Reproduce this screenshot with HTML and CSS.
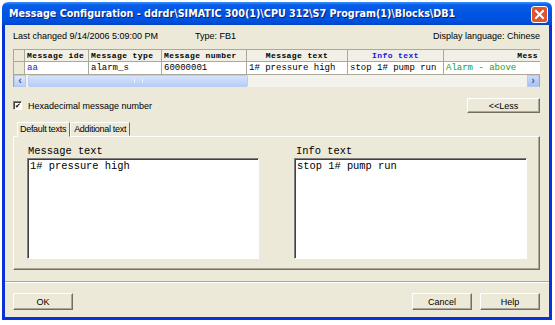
FILE: index.html
```html
<!DOCTYPE html>
<html lang="en">

<head>
    <meta charset="UTF-8">
    <title>Message Configuration</title>
    <link rel="stylesheet" href="styles.css">
</head>

<body>

    <div class="window">
        <div class="titlebar">
            <span class="title">Message Configuration - ddrdr\SIMATIC 300(1)\CPU 312\S7 Program(1)\Blocks\DB1</span>
            <span class="close">
                <svg width="17" height="17" viewBox="0 0 17 17">
                    <rect x="0.5" y="0.5" width="16" height="16" rx="2.5" fill="#E0542F" stroke="#fff"/>
                    <path d="M5 5 L12 12 M12 5 L5 12" stroke="#fff" stroke-width="2" stroke-linecap="square"/>
                </svg>
            </span>
        </div>

        <div class="body">
            <div class="info-row">
                <span class="changed">Last changed 9/14/2006 5:09:00 PM</span>
                <span class="type">Type: FB1</span>
                <span class="lang">Display language: Chinese</span>
            </div>

            <div class="grid">
                <table>
                    <tr class="head">
                        <td class="corner"></td>
                        <td class="c1">Message ide</td>
                        <td class="c2">Message type</td>
                        <td class="c3">Message number</td>
                        <td class="c4 center">Message text</td>
                        <td class="c5 center blue">Info text</td>
                        <td class="c6 right">Mess</td>
                    </tr>
                    <tr class="data">
                        <td class="corner"></td>
                        <td class="blue">aa</td>
                        <td>alarm_s</td>
                        <td>60000001</td>
                        <td>1# pressure high</td>
                        <td>stop 1# pump run</td>
                        <td class="green">Alarm - above</td>
                    </tr>
                </table>
                <div class="hscroll">
                    <span class="arrow">&lsaquo;</span>
                    <span class="track"><span class="thumb"><span class="grip"></span></span></span>
                    <span class="arrow arrow-right">&rsaquo;</span>
                </div>
            </div>

            <div class="options-row">
                <label class="check"><span class="box">&#10004;</span>Hexadecimal message number</label>
                <button class="btn less">&lt;&lt;Less</button>
            </div>

            <div class="tabs">
                <span class="tab active">Default texts</span>
                <span class="tab">Additional text</span>
            </div>
            <div class="tab-panel">
                <div class="field">
                    <div class="field-label">Message text</div>
                    <div class="textbox">1# pressure high</div>
                </div>
                <div class="field">
                    <div class="field-label">Info text</div>
                    <div class="textbox">stop 1# pump run</div>
                </div>
            </div>

            <div class="separator"></div>

            <div class="buttons">
                <button class="btn">OK</button>
                <span class="spacer"></span>
                <button class="btn">Cancel</button>
                <button class="btn">Help</button>
            </div>
        </div>
    </div>

</body>

</html>
```

FILE: styles.css
```css
/* dialog styles */

body {
    margin: 0;
    background: #fff;
    font-family: "Liberation Sans", Arial, sans-serif;
    font-size: 9px;
    color: #000;
}

.window {
    margin: 2px 0 0 2px;
    width: 550px;
    height: 318px;
    display: flex;
    flex-direction: column;
    box-sizing: border-box;
}

.titlebar {
    height: 23px;
    border-radius: 6px 6px 0 0;
    background: linear-gradient(#3D95FF 0%, #0A5FE8 12%, #0054E3 50%, #0050DC 85%, #0046C8 100%);
    display: flex;
    align-items: center;
    padding: 0 4px 0 7px;
}

.title {
    flex: 1;
    color: #fff;
    font-family: "DejaVu Sans", sans-serif;
    font-weight: bold;
    font-size: 9.6px;
    text-shadow: 1px 1px #0A1E6E;
    white-space: nowrap;
    overflow: hidden;
}

.close {
    display: flex;
    margin-top: 1px;
}

.body {
    flex: 1;
    background: #ECE9D8;
    border: 3px solid #0831D9;
    border-top: none;
    padding: 4px 9px 0 8px;
    display: flex;
    flex-direction: column;
}

.info-row {
    display: flex;
    height: 12px;
    align-items: center;
    margin-top: 1px;
}

.changed {
    width: 182px;
}

.type {
    flex: 1;
}

.grid {
    margin-top: 7px;
    border: 1px solid #ACA899;
    border-bottom: none;
    width: 527px;
    box-sizing: border-box;
}

table {
    border-collapse: collapse;
    table-layout: fixed;
    width: 526px;
    font-family: "Liberation Mono", monospace;
    font-size: 9px;
}

td {
    border: 1px solid #ACA899;
    padding: 0 2px;
    white-space: nowrap;
    overflow: hidden;
    height: 11px;
    line-height: 11px;
}

.head td {
    background: #F2F0E6;
    font-weight: bold;
    font-size: 8px;
    letter-spacing: 0.4px;
    border-top: none;
}

.data td {
    background: #fff;
    height: 12px;
}

td:first-child {
    border-left: none;
}

td:last-child {
    border-right: none;
}

.corner {
    width: 6px;
    background: #ECE9D8 !important;
}

.c1 { width: 59px; }
.c2 { width: 68px; }
.c3 { width: 80px; }
.c4 { width: 96px; }
.c5 { width: 91px; }

.center {
    text-align: center;
}

.right {
    text-align: right;
}

.blue {
    color: #1414E6;
}

.green {
    color: #22A022;
}

.hscroll {
    display: flex;
    height: 12px;
    background: #F3F2EC;
}

.arrow {
    width: 12px;
    background: linear-gradient(#DDE9FE, #BBCEF8);
    border: 1px solid #B5C9F1;
    box-sizing: border-box;
    font-size: 11px;
    font-weight: bold;
    line-height: 9px;
    text-align: center;
    color: #4D6185;
}

.arrow-right {
    background: linear-gradient(#CBDCFD, #A6C1F6);
}

.track {
    flex: 1;
    display: flex;
    padding: 0 0 0 2px;
}

.thumb {
    width: 220px;
    background: linear-gradient(#D5E3FD, #B7CDF8);
    border: 1px solid #B8CCF4;
    border-radius: 2px;
    box-sizing: border-box;
    display: flex;
    justify-content: center;
    align-items: center;
}

.grip {
    width: 7px;
    height: 4px;
    border-left: 1px solid #EEF4FE;
    border-right: 1px solid #EEF4FE;
}

.options-row {
    display: flex;
    align-items: center;
    justify-content: space-between;
    margin-top: 11px;
    height: 15px;
}

.check {
    display: flex;
    align-items: center;
}

.box {
    width: 7px;
    height: 7px;
    background: #fff;
    border: 1px solid #808080;
    border-right-color: #fff;
    border-bottom-color: #fff;
    box-shadow: inset 1px 1px #404040;
    font-size: 7px;
    line-height: 7px;
    text-align: center;
    margin-right: 6px;
}

.btn {
    font-family: "Liberation Sans", Arial, sans-serif;
    font-size: 9px;
    background: #ECE9D8;
    width: 60px;
    height: 17px;
    padding: 0;
    border: 1px solid;
    border-color: #fff #716F64 #716F64 #fff;
    box-shadow: inset -1px -1px #ACA899;
}

.less {
    width: 73px;
    height: 15px;
}

.tabs {
    display: flex;
    margin-top: 9px;
    padding-left: 4px;
    height: 14px;
    align-items: flex-end;
}

.tab {
    border: 1px solid;
    border-color: #fff #716F64 transparent #fff;
    padding: 0 3px;
    height: 12px;
    line-height: 12px;
    letter-spacing: -0.3px;
}

.tab.active {
    height: 13px;
    line-height: 13px;
    margin-bottom: -1px;
    background: #ECE9D8;
    position: relative;
    padding: 0 3px 0 2px;
}

.tab-panel {
    height: 134px;
    border: 1px solid;
    border-color: #fff #716F64 #716F64 #fff;
    box-shadow: inset -1px -1px #ACA899;
    display: flex;
    justify-content: space-between;
    padding: 8px 12px 0 13px;
    box-sizing: border-box;
}

.field {
    width: 232px;
}

.field-label {
    font-family: "Liberation Mono", monospace;
    font-size: 10.4px;
    height: 12px;
    line-height: 12px;
    margin-left: 1px;
}

.textbox {
    margin-top: 1px;
    height: 101px;
    background: #fff;
    border: 1px solid;
    border-color: #808080 #fff #fff #808080;
    box-shadow: inset 1px 1px #404040;
    font-family: "Liberation Mono", monospace;
    font-size: 10.4px;
    line-height: 12px;
    padding: 1px 2px;
    box-sizing: border-box;
}

.field + .field .textbox {
    margin-left: -1px;
}

.separator {
    margin: 11px -9px 0 -8px;
    border-top: 1px solid #ACA899;
    border-bottom: 1px solid #fff;
}

.buttons {
    display: flex;
    gap: 8px;
    margin-top: 10px;
}

.spacer {
    flex: 1;
}
```
